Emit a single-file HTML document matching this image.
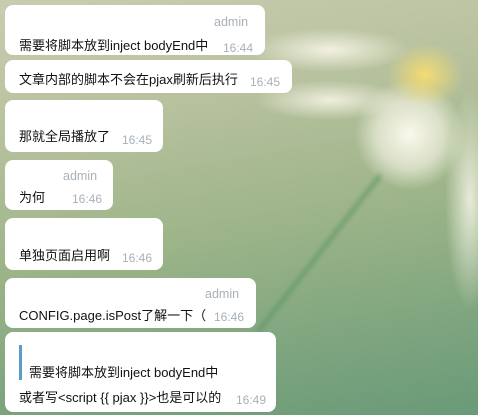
<!DOCTYPE html>
<html><head><meta charset="utf-8"><style>
body{margin:0;width:478px;height:415px;overflow:hidden;position:relative;font-family:"Liberation Sans","Noto Sans CJK SC",sans-serif;
background:
radial-gradient(ellipse 38px 32px at 425px 75px,rgba(250,222,110,0.9),rgba(250,222,110,0) 100%),
radial-gradient(ellipse 55px 55px at 410px 135px,rgba(250,248,235,1),rgba(250,248,235,0.6) 60%,rgba(250,248,235,0) 100%),
radial-gradient(ellipse 80px 22px at 330px 50px,rgba(245,243,228,0.95),rgba(245,243,228,0) 100%),
radial-gradient(ellipse 75px 20px at 330px 100px,rgba(245,243,228,0.9),rgba(245,243,228,0) 100%),
radial-gradient(ellipse 25px 110px at 470px 200px,rgba(240,240,225,0.9),rgba(240,240,225,0) 100%),
linear-gradient(170deg,#c8cdb0 0%,#b5c09c 30%,#9cb488 55%,#7ea57f 80%,#6a9a78 100%);}
.stem{position:absolute;top:175px;width:5px;height:200px;background:rgba(90,150,100,0.6);transform:rotate(38deg);transform-origin:top;filter:blur(2px);left:378px;}
.b{position:absolute;left:5px;background:#fff;border-radius:8px;font-size:13px;color:#111}
.t{position:absolute;font-size:12px;color:#a8b0b8}
.n{position:absolute;font-size:12.5px;color:#a8b0b8}
.x{position:absolute;left:14px;white-space:nowrap}
</style></head><body>
<div class="stem"></div>
<div class="b" style="top:5px;width:260px;height:50px"><span class="n" style="left:209px;top:10px">admin</span><span class="x" style="top:30px">需要将脚本放到inject bodyEnd中</span><span class="t" style="left:218px;top:36px">16:44</span></div>
<div class="b" style="top:60px;width:287px;height:33px"><span class="x" style="top:9px">文章内部的脚本不会在pjax刷新后执行</span><span class="t" style="left:245px;top:15px">16:45</span></div>
<div class="b" style="top:100px;width:158px;height:52px"><span class="x" style="top:26px">那就全局播放了</span><span class="t" style="left:117px;top:33px">16:45</span></div>
<div class="b" style="top:160px;width:108px;height:50px"><span class="n" style="left:58px;top:9px">admin</span><span class="x" style="top:27px">为何</span><span class="t" style="left:67px;top:32px">16:46</span></div>
<div class="b" style="top:218px;width:158px;height:52px"><span class="x" style="top:27px">单独页面启用啊</span><span class="t" style="left:117px;top:33px">16:46</span></div>
<div class="b" style="top:278px;width:251px;height:50px"><span class="n" style="left:200px;top:9px">admin</span><span class="x" style="top:27px">CONFIG.page.isPost了解一下（</span><span class="t" style="left:209px;top:32px">16:46</span></div>
<div class="b" style="top:332px;width:271px;height:80px"><div style="position:absolute;left:14px;top:13px;width:3px;height:35px;background:#5b9bc8"></div><span class="x" style="left:24px;top:30px">需要将脚本放到inject bodyEnd中</span><span class="x" style="top:55px">或者写&lt;script {{ pjax }}&gt;也是可以的</span><span class="t" style="left:231px;top:61px">16:49</span></div>
</body></html>
